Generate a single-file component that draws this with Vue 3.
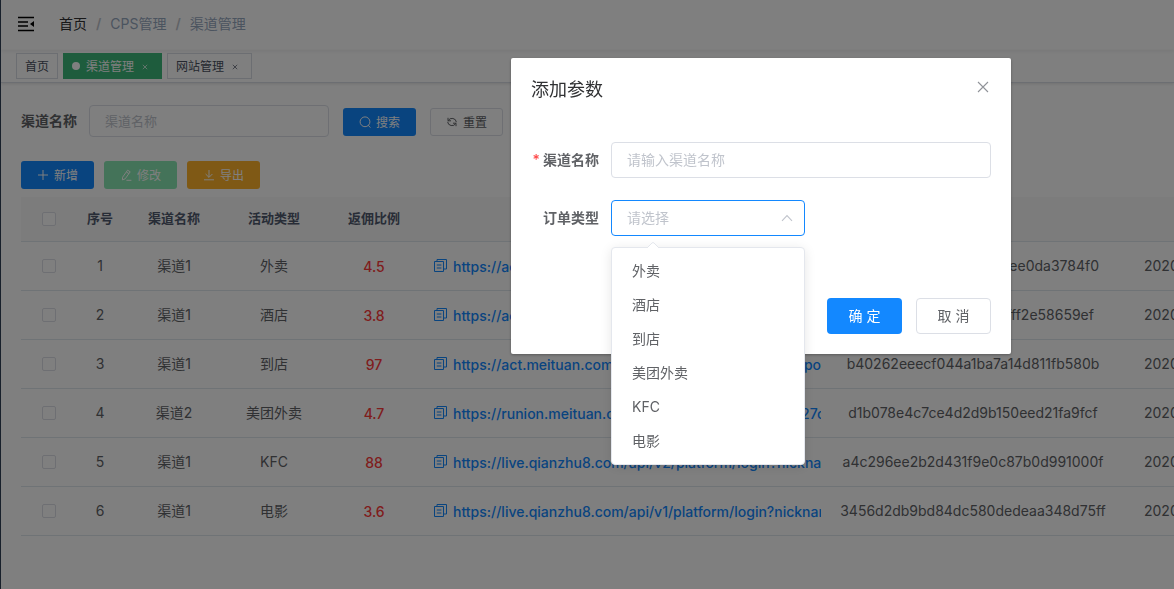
<script setup>
import { ref } from 'vue'

const tags = [
  { name: '首页', active: false, closable: false },
  { name: '渠道管理', active: true, closable: true },
  { name: '网站管理', active: false, closable: true },
]

const rows = [
  { no: 1, channel: '渠道1', type: '外卖', rate: '4.5', url: 'https://act.meituan.com', end: '', code: 'c81d4e2eaf5b4c9b8d07ee0da3784f0' },
  { no: 2, channel: '渠道1', type: '酒店', rate: '3.8', url: 'https://act.meituan.com', end: '', code: 'e5a07b31c9d64f2a8b6fff2e58659ef' },
  { no: 3, channel: '渠道1', type: '到店', rate: '97', url: 'https://act.meituan.com', end: 'po', code: 'b40262eeecf044a1ba7a14d811fb580b' },
  { no: 4, channel: '渠道2', type: '美团外卖', rate: '4.7', url: 'https://runion.meituan.com', end: '27c', code: 'd1b078e4c7ce4d2d9b150eed21fa9fcf' },
  { no: 5, channel: '渠道1', type: 'KFC', rate: '88', url: 'https://live.qianzhu8.com/api/v2/platform/login?nickname', end: '', code: 'a4c296ee2b2d431f9e0c87b0d991000f' },
  { no: 6, channel: '渠道1', type: '电影', rate: '3.6', url: 'https://live.qianzhu8.com/api/v1/platform/login?nickname', end: '', code: '3456d2db9bd84dc580dedeaa348d75ff' },
]

const orderTypes = ['外卖', '酒店', '到店', '美团外卖', 'KFC', '电影']
const orderType = ref('')
const channelName = ref('')
const query = ref('')
</script>

<template>
  <div class="app">
    <div class="page">
      <header class="navbar">
        <button class="fold" aria-label="收起菜单">
          <svg width="18" height="16" viewBox="0 0 18 16">
            <path d="M1 1.5h16M1 6h10M1 10h10M1 14.5h16" fill="none" stroke="#000" stroke-width="1.7" />
            <path d="M17 5v6l-4-3z" fill="#000" />
          </svg>
        </button>
        <nav class="crumbs">
          <a href="#">首页</a>
          <span class="slash">/</span>
          <span>CPS管理</span>
          <span class="slash">/</span>
          <span>渠道管理</span>
        </nav>
      </header>

      <div class="tags">
        <a v-for="t in tags" :key="t.name" href="#" class="tag" :class="{ active: t.active }">
          <i v-if="t.active" class="dot"></i>
          <span>{{ t.name }}</span>
          <svg v-if="t.closable" class="tag-x" width="6" height="6" viewBox="0 0 6 6">
            <path d="M.8.8l4.4 4.4M5.2.8L.8 5.2" fill="none" stroke="currentColor" stroke-width=".7" />
          </svg>
        </a>
      </div>

      <main class="main">
        <form class="search" @submit.prevent>
          <label for="q">渠道名称</label>
          <input id="q" v-model="query" type="text" placeholder="渠道名称" />
          <button class="btn primary">
            <svg class="ico" viewBox="0 0 12 12"><circle cx="6" cy="5.8" r="4.9" /><path d="M9.2 9.2l2.2 2.4" /></svg>
            <span>搜索</span>
          </button>
          <button class="btn plain" type="button">
            <svg class="ico" viewBox="0 0 12 12"><path d="M2 1.8v3h3M2.2 4.6A4.4 4.4 0 0 1 10.4 6.2M10 10.2v-3H7M9.8 7.4A4.4 4.4 0 0 1 1.6 5.8" /></svg>
            <span>重置</span>
          </button>
        </form>

        <div class="actions">
          <button class="btn primary">
            <svg class="ico" viewBox="0 0 12 12"><path d="M6 1v10M1 6h10" /></svg>
            <span>新增</span>
          </button>
          <button class="btn success" disabled>
            <svg class="ico" viewBox="0 0 12 12"><path d="M7.6 1.2l2.6 1.6-5 7-2.8 1.1.2-2.7zM6.4 3l2.6 1.7M6.4 11.3h5" /></svg>
            <span>修改</span>
          </button>
          <button class="btn warning">
            <svg class="ico" viewBox="0 0 12 12"><path d="M6 1v7.2M2.6 5L6 8.4 9.4 5M1 10.8h10" /></svg>
            <span>导出</span>
          </button>
        </div>

        <div class="table-wrap">
          <table>
            <colgroup>
              <col class="c-check" /><col class="c-no" /><col class="c-mid" /><col class="c-mid" /><col class="c-mid" />
              <col class="c-url" /><col class="c-code" /><col class="c-date" />
            </colgroup>
            <thead>
              <tr>
                <th class="mid"><input type="checkbox" aria-label="全选" /></th>
                <th>序号</th>
                <th>渠道名称</th>
                <th>活动类型</th>
                <th>返佣比例</th>
                <th></th>
                <th></th>
                <th></th>
              </tr>
            </thead>
            <tbody>
              <tr v-for="r in rows" :key="r.no">
                <td class="mid"><input type="checkbox" :aria-label="'选择' + r.no" /></td>
                <td>{{ r.no }}</td>
                <td>{{ r.channel }}</td>
                <td>{{ r.type }}</td>
                <td class="mid rate">{{ r.rate }}</td>
                <td class="mid">
                  <a class="url" href="#">
                    <svg width="13" height="14" viewBox="0 0 13 14">
                      <path d="M.5 3.5h9v10h-9zM3 3.5v-2h9.5v9.5H9.7M2.8 7h4.6M2.8 10h4.6" fill="none" stroke="currentColor" />
                    </svg>
                    <span class="link">{{ r.url }}</span>
                    <span v-if="r.end" class="end">{{ r.end }}</span>
                  </a>
                </td>
                <td class="code">{{ r.code }}</td>
                <td class="date">2020</td>
              </tr>
            </tbody>
          </table>
        </div>
      </main>
    </div>

    <div class="mask">
      <section class="dialog" role="dialog" aria-labelledby="dlg-title">
        <div class="dlg-head">
          <h2 id="dlg-title">添加参数</h2>
          <button class="close" aria-label="关闭">
            <svg width="12" height="12" viewBox="0 0 12 12"><path d="M1 1l10 10M11 1L1 11" fill="none" stroke="#909399" stroke-width="1.1" /></svg>
          </button>
        </div>
        <form @submit.prevent>
          <div class="field">
            <label for="name"><b class="star">*</b> 渠道名称</label>
            <input id="name" v-model="channelName" type="text" placeholder="请输入渠道名称" />
          </div>
          <div class="field">
            <label for="type">订单类型</label>
            <div class="select">
              <select id="type" v-model="orderType">
                <option value="">请选择</option>
                <option v-for="o in orderTypes" :key="o" :value="o">{{ o }}</option>
              </select>
              <svg class="caret" width="12" height="8" viewBox="0 0 12 8"><path d="M1 6.8L6 1.6l5 5.2" fill="none" stroke="#c0c4cc" stroke-width="1.1" /></svg>
              <div class="drop">
                <svg class="arrow" width="14" height="7" viewBox="0 0 14 7"><path d="M1 7l5-5q1-1 2 0l5 5" fill="#fff" stroke="#e4e7ed" /></svg>
                <ul>
                  <li v-for="o in orderTypes" :key="o" @click="orderType = o">{{ o }}</li>
                </ul>
              </div>
            </div>
          </div>
          <div class="dlg-foot">
            <button class="big primary">确 定</button>
            <button class="big plain" type="button">取 消</button>
          </div>
        </form>
      </section>
    </div>
  </div>
</template>

<style>
body {
  overflow: hidden;
}
</style>

<style scoped>
.app {
  font-family: Inter, "Noto Sans CJK SC", sans-serif;
  font-size: 14px;
  color: #606266;
}
.app * {
  box-sizing: border-box;
}
button, input, select {
  font-family: inherit;
  margin: 0;
}
a {
  text-decoration: none;
  color: inherit;
}
.page {
  min-height: 100vh;
  background: #fff;
  border-left: 1px solid #304156;
  overflow: hidden;
}
.navbar {
  display: flex;
  align-items: center;
  height: 50px;
  padding-left: 16px;
  box-shadow: 0 1px 4px rgba(0, 21, 41, 0.08);
}
.fold {
  display: flex;
  padding: 0 0 2px;
  border: 0;
  background: none;
}
.crumbs {
  display: flex;
  align-items: center;
  margin-left: 24px;
  line-height: 48px;
  padding-bottom: 2px;
  color: #97a8be;
}
.crumbs a {
  color: #303133;
}
.slash {
  margin: 0 9px;
  font-weight: 600;
  color: #c0c4cc;
}
.tags {
  display: flex;
  gap: 5px;
  height: 33px;
  padding: 3px 15px 0;
  border-bottom: 1px solid #d8dce5;
  box-shadow: 0 1px 3px rgba(0, 0, 0, 0.12);
}
.tag {
  display: flex;
  align-items: center;
  height: 26px;
  padding: 0 8px;
  border: 1px solid #d8dce5;
  font-size: 12px;
  color: #495060;
}
.tag span {
  padding-bottom: 2px;
}
.tag.active {
  background: #3cb87a;
  border-color: #3cb87a;
  color: #fff;
}
.dot {
  width: 8px;
  height: 8px;
  margin-right: 6px;
  border-radius: 50%;
  background: #fff;
}
.tag-x {
  margin: 2px 5px 0 8px;
}
.main {
  padding: 22px 0 0 20px;
}
.search {
  display: flex;
  align-items: flex-end;
}
.search label {
  width: 68px;
  line-height: 30px;
  padding-bottom: 1px;
  font-weight: 700;
}
input[type="text"] {
  border: 1px solid #dcdfe6;
  border-radius: 4px;
  padding: 0 15px 2px;
  font-size: 14px;
  background: #fff;
  color: #606266;
  outline: none;
}
input::placeholder {
  color: #c0c4cc;
  opacity: 1;
}
.search input {
  width: 240px;
  height: 32px;
}
.search input::placeholder {
  font-size: 13px;
}
.search .btn {
  margin: 0 0 1px 14px;
}
.btn {
  display: flex;
  align-items: center;
  justify-content: center;
  gap: 5px;
  width: 73px;
  height: 28px;
  padding: 0;
  border: 1px solid transparent;
  border-radius: 3px;
  font-size: 12px;
  color: #fff;
}
.btn span {
  padding-bottom: 2px;
}
.ico {
  width: 12px;
  height: 12px;
  fill: none;
  stroke: currentColor;
  stroke-width: 1;
}
.primary {
  background: #1388ff;
  color: #fff;
}
.success {
  background: #89e6b2;
}
.warning {
  background: #ffb22b;
}
.plain {
  background: #fff;
  border-color: #dcdfe6;
  color: #606266;
}
.actions {
  display: flex;
  gap: 10px;
  margin: 24px 0 8px;
}
.table-wrap {
  overflow: hidden;
}
table {
  width: 100%;
  min-width: 1153px;
  table-layout: fixed;
  border-collapse: separate;
  border-spacing: 0;
}
.c-check { width: 55px; }
.c-no { width: 48px; }
.c-mid { width: 100px; }
.c-url { width: 408px; }
.c-code { width: 282px; }
th {
  height: 45px;
  padding: 0 0 4px;
  background: #f8f8f9;
  border-bottom: 1px solid #dfe6ec;
  font-size: 13px;
  font-weight: 700;
  color: #515a6e;
}
td {
  height: 49px;
  padding: 0 0 2px;
  border-bottom: 1px solid #dfe6ec;
  text-align: center;
  white-space: nowrap;
}
.mid {
  padding: 0;
}
input[type="checkbox"] {
  appearance: none;
  display: block;
  width: 14px;
  height: 14px;
  margin: 0 auto;
  border: 1px solid #dcdfe6;
  border-radius: 2px;
  background: #fff;
}
.rate {
  font-weight: 500;
  color: #ff3b3b;
}
.url {
  display: flex;
  align-items: center;
  margin: 0 11px 0 10px;
  overflow: hidden;
  font-weight: 500;
  color: #1388ff;
}
.url svg {
  flex: none;
  margin: 0 6px 2px 0;
}
.end {
  max-width: 20px;
  margin-left: auto;
  overflow: hidden;
}
td.date {
  padding-left: 30px;
  text-align: left;
}
.mask {
  position: fixed;
  inset: 0;
  display: flex;
  justify-content: center;
  align-items: flex-start;
  padding: 58px 0 0 348px;
  background: rgba(0, 0, 0, 0.5);
}
.dialog {
  width: 500px;
  padding: 20px;
  border-radius: 2px;
  background: #fff;
  box-shadow: 0 1px 3px rgba(0, 0, 0, 0.3);
}
.dlg-head {
  display: flex;
  justify-content: space-between;
  height: 64px;
}
h2 {
  margin: 0;
  font-size: 18px;
  line-height: 24px;
  font-weight: 400;
  color: #303133;
}
.close {
  display: flex;
  align-items: center;
  width: 14px;
  height: 18px;
  padding: 0;
  border: 0;
  background: none;
}
.field {
  display: flex;
  margin-bottom: 22px;
}
.field label {
  width: 80px;
  padding-right: 12px;
  line-height: 36px;
  text-align: right;
  font-weight: 700;
}
.star {
  font-weight: 500;
  color: #ff4949;
}
.field > input {
  flex: 1;
  height: 36px;
}
.select {
  position: relative;
  width: 194px;
}
select {
  appearance: none;
  display: block;
  width: 100%;
  height: 36px;
  padding: 0 15px 2px;
  border: 1px solid #1388ff;
  border-radius: 4px;
  background: #fff;
  font-size: 14px;
  color: #c0c4cc;
}
.caret {
  position: absolute;
  right: 12px;
  top: 14px;
}
.drop {
  position: absolute;
  top: 47px;
  left: 0;
  width: 100%;
  border: 1px solid #e4e7ed;
  border-radius: 4px;
  background: #fff;
  box-shadow: 0 2px 12px rgba(0, 0, 0, 0.1);
}
.arrow {
  position: absolute;
  left: 34px;
  top: -7px;
}
ul {
  margin: 0;
  padding: 6px 0;
  list-style: none;
}
li {
  padding: 0 20px;
  line-height: 34px;
}
.dlg-foot {
  display: flex;
  justify-content: flex-end;
  gap: 14px;
  padding-top: 40px;
}
.big {
  width: 75px;
  height: 36px;
  padding: 0 0 2px;
  border: 1px solid transparent;
  border-radius: 4px;
  font-size: 14px;
}
.big.plain {
  border-color: #dcdfe6;
}
</style>
